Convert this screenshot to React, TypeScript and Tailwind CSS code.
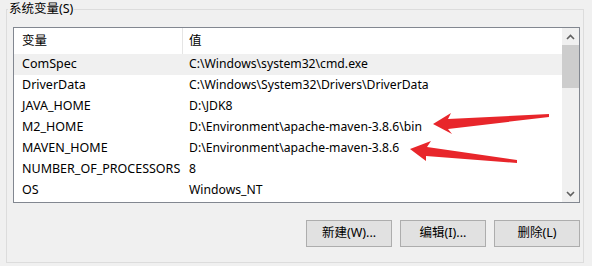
import React from "react";

const rows = [
  { name: "ComSpec", value: "C:\\Windows\\system32\\cmd.exe", selected: true },
  { name: "DriverData", value: "C:\\Windows\\System32\\Drivers\\DriverData" },
  { name: "JAVA_HOME", value: "D:\\JDK8" },
  { name: "M2_HOME", value: "D:\\Environment\\apache-maven-3.8.6\\bin" },
  { name: "MAVEN_HOME", value: "D:\\Environment\\apache-maven-3.8.6" },
  { name: "NUMBER_OF_PROCESSORS", value: "8" },
  { name: "OS", value: "Windows_NT" },
];

function Chevron({ up }: { up?: boolean }) {
  return (
    <svg width="9" height="6" viewBox="0 0 9 6">
      <path
        d={up ? "M1 5 L4.5 1.5 L8 5" : "M1 1 L4.5 4.5 L8 1"}
        fill="none"
        stroke="#606060"
        strokeWidth="1.6"
      />
    </svg>
  );
}

function Btn({ label }: { label: string }) {
  return (
    <button className="w-[86px] h-[27px] border border-[#adadad] bg-[#e1e1e1] text-[12.5px] text-black flex items-center justify-center">
      {label}
    </button>
  );
}

export default function App() {
  return (
    <div
      className="relative w-[592px] h-[266px] bg-[#f0f0f0] overflow-hidden text-black"
      style={{ fontFamily: '"Noto Sans", "Noto Sans CJK SC", sans-serif' }}
    >
      {/* group box */}
      <div className="absolute left-[6px] top-[9px] w-[578px] h-[254px] border border-[#dcdcdc]" />
      <div className="relative pt-0 pl-[8px] h-[18px] leading-[18px] text-[12.5px]">
        <span className="bg-[#f0f0f0] px-[1px]">系统变量(S)</span>
      </div>

      <div className="relative ml-[13px] mt-[9px] w-[567px] h-[176px] border border-[#828790] bg-white flex">
        <div className="flex-1 flex flex-col text-[12.5px]">
          <div className="h-[26px] flex items-center">
            <div className="w-[168px] pl-[8px]">变量</div>
            <div className="h-full w-px bg-[#e5e5e5]" />
            <div className="pl-[6px]">值</div>
          </div>
          {rows.map((r) => (
            <div
              key={r.name}
              className={`h-[21px] flex items-center ${r.selected ? "bg-[#f0f0f0]" : ""}`}
            >
              <div className="w-[169px] pl-[8px] whitespace-nowrap">{r.name}</div>
              <div className="pl-[6px] whitespace-nowrap text-[12.2px]">{r.value}</div>
            </div>
          ))}
        </div>
        <div className="w-[17px] bg-[#f0f0f0] flex flex-col items-center">
          <div className="h-[17px] flex items-center justify-center">
            <Chevron up />
          </div>
          <div className="w-full h-[43px] bg-[#cdcdcd]" />
          <div className="flex-1" />
          <div className="h-[17px] flex items-center justify-center">
            <Chevron />
          </div>
        </div>
      </div>

      <div className="relative flex justify-end gap-[8px] pr-[12px] mt-[17px]">
        <Btn label="新建(W)..." />
        <Btn label="编辑(I)..." />
        <Btn label="删除(L)" />
      </div>

      {/* red annotation arrows */}
      <svg className="absolute left-0 top-0" width="592" height="266" viewBox="0 0 592 266">
        <polygon
          points="433,124 451,113 448,119 549,114 549,117 448,129 452,134"
          fill="#e8262b"
        />
        <polygon
          points="410,149 431,141 427,147 517,160 517,163 426,156 426,161"
          fill="#e8262b"
        />
      </svg>
    </div>
  );
}
